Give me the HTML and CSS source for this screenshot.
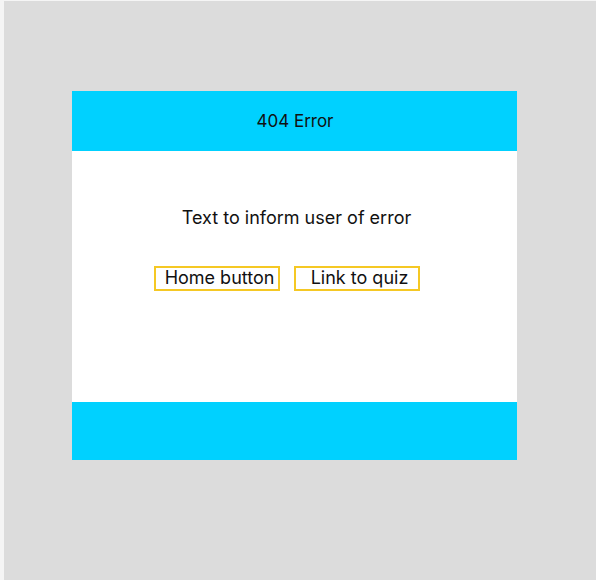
FILE: index.html
```html
<!DOCTYPE html>
<html>
<head>
<meta charset="utf-8">
<link rel="stylesheet" href="styles.css">
</head>
<body>
<div class="frame">
  <div class="card">
    <div class="header">404 Error</div>
    <div class="content">
      <p class="message">Text to inform user of error</p>
      <div class="actions">
        <a class="btn">Home button</a>
        <a class="btn">Link to quiz</a>
      </div>
    </div>
    <div class="footer"></div>
  </div>
</div>
</body>
</html>
```
FILE: styles.css
```css
html, body {
  margin: 0;
  height: 100%;
}
body {
  background: #f5f5f5;
  padding: 1px 0 0 4px;
  box-sizing: border-box;
  font-family: Inter, "Noto Sans", sans-serif;
  color: #111;
}
.frame {
  background: #dcdcdc;
  height: 100%;
  padding: 90px 0 0 68px;
  box-sizing: border-box;
}
.card {
  width: 445px;
  background: #fff;
}
.header {
  height: 60px;
  background: #00d1ff;
  display: flex;
  align-items: center;
  justify-content: center;
  font-size: 17px;
  padding-left: 1px;
}
.content {
  height: 251px;
  box-sizing: border-box;
  padding-top: 56px;
}
.message {
  margin: 0;
  text-align: center;
  font-size: 18px;
  line-height: 22px;
  padding-left: 4px;
}
.actions {
  display: flex;
  gap: 14px;
  margin: 37px 0 0 82px;
}
.btn {
  width: 126px;
  height: 25px;
  box-sizing: border-box;
  border: 2px solid #f5c824;
  display: flex;
  align-items: center;
  justify-content: center;
  padding: 0 0 2px 5px;
  font-size: 18px;
}
.footer {
  height: 58px;
  background: #00d1ff;
}
```
